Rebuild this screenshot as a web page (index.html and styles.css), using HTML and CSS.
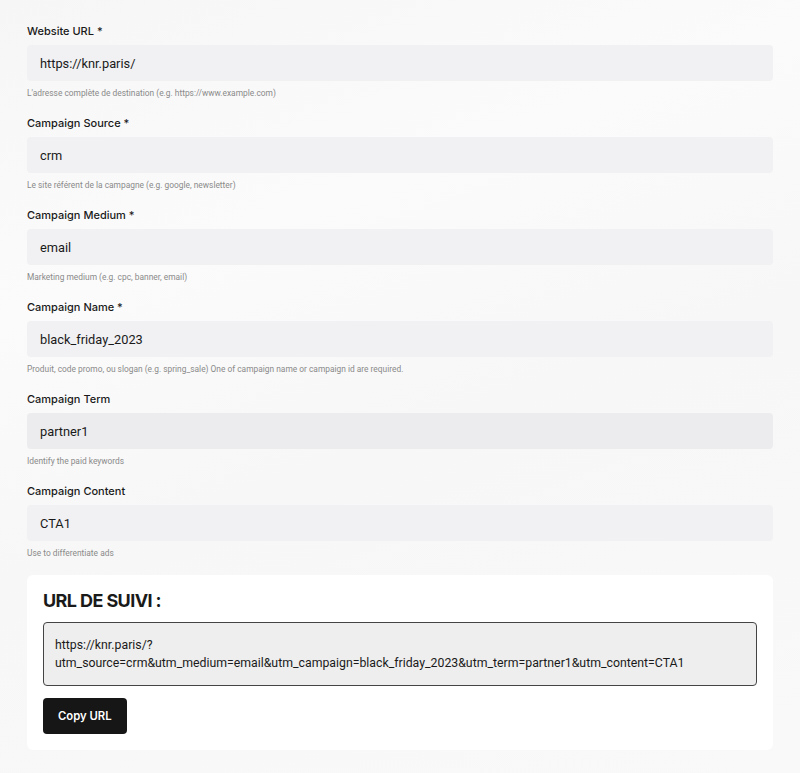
FILE: index.html
```html
<!DOCTYPE html>
<html lang="en">
<head>
    <meta charset="UTF-8">
    <meta name="viewport" content="width=device-width, initial-scale=1.0">
    <title>UTM Builder</title>
    <link rel="stylesheet" href="styles.css">
</head>
<body>
    <div class="container">
        <div class="form-group">
            <label for="url">Website URL *</label>
            <input type="text" id="url" value="https://knr.paris/">
            <p class="help">L'adresse complète de destination (e.g. https://www.example.com)</p>
        </div>
        <div class="form-group">
            <label for="source">Campaign Source *</label>
            <input type="text" id="source" value="crm">
            <p class="help">Le site référent de la campagne (e.g. google, newsletter)</p>
        </div>
        <div class="form-group">
            <label for="medium">Campaign Medium *</label>
            <input type="text" id="medium" value="email">
            <p class="help">Marketing medium (e.g. cpc, banner, email)</p>
        </div>
        <div class="form-group">
            <label for="name">Campaign Name *</label>
            <input type="text" id="name" value="black_friday_2023">
            <p class="help">Produit, code promo, ou slogan (e.g. spring_sale) One of campaign name or campaign id are required.</p>
        </div>
        <div class="form-group">
            <label for="term">Campaign Term</label>
            <input type="text" id="term" class="focused" value="partner1">
            <p class="help">Identify the paid keywords</p>
        </div>
        <div class="form-group">
            <label for="content">Campaign Content</label>
            <input type="text" id="content" value="CTA1">
            <p class="help">Use to differentiate ads</p>
        </div>

        <div class="result">
            <h2>URL DE SUIVI :</h2>
            <div class="result-url">https://knr.paris/?<br>utm_source=crm&amp;utm_medium=email&amp;utm_campaign=black_friday_2023&amp;utm_term=partner1&amp;utm_content=CTA1</div>
            <button id="copy-btn">Copy URL</button>
        </div>
    </div>
</body>
</html>
```

FILE: styles.css
```css
body{
    margin: 0;
    font-family: Inter, "Liberation Sans", sans-serif;
    background: linear-gradient(160deg, #f6f6f6 0%, #fbfbfb 30%, #f7f7f7 55%, #f9f9f9 100%);
    min-height: 773px;
}
.container{
    padding: 23px 27px 0 27px;
}
.form-group{
    margin-bottom: 16px;
}
label{
    display: block;
    font-size: 11px;
    font-weight: 500;
    line-height: 16px;
    color: #1a1a1a;
    margin-bottom: 6px;
}
input{
    display: block;
    box-sizing: border-box;
    width: 100%;
    height: 36px;
    padding: 0 13px;
    border: none;
    border-radius: 4px;
    background-color: #f1f1f3;
    font-family: Roboto, "Liberation Sans", sans-serif;
    font-size: 12.8px;
    color: #1a1a1a;
    outline: none;
}
input.focused{
    background-color: #ececee;
}
.help{
    margin: 6px 0 0 0;
    font-family: Roboto, "Liberation Sans", sans-serif;
    font-size: 8.4px;
    line-height: 12px;
    color: #8a8a8a;
}
.result{
    margin-top: 12px;
    background-color: #ffffff;
    border-radius: 6px;
    padding: 14px 16px 16px 16px;
}
.result h2{
    margin: 0 0 9px 0;
    font-size: 18px;
    font-weight: 700;
    line-height: 24px;
    letter-spacing: -0.6px;
    color: #1a1a1a;
}
.result-url{
    border: 1px solid #444;
    border-radius: 4px;
    background-color: #eeeeee;
    padding: 13px 11px;
    font-family: Roboto, "Liberation Sans", sans-serif;
    font-size: 12.3px;
    line-height: 18px;
    color: #1a1a1a;
}
button{
    margin-top: 12px;
    height: 36px;
    padding: 0 15px;
    background-color: #161616;
    color: white;
    border: none;
    border-radius: 4px;
    font-family: Inter, "Liberation Sans", sans-serif;
    font-size: 11.3px;
    font-weight: 600;
    cursor: pointer;
}
```
